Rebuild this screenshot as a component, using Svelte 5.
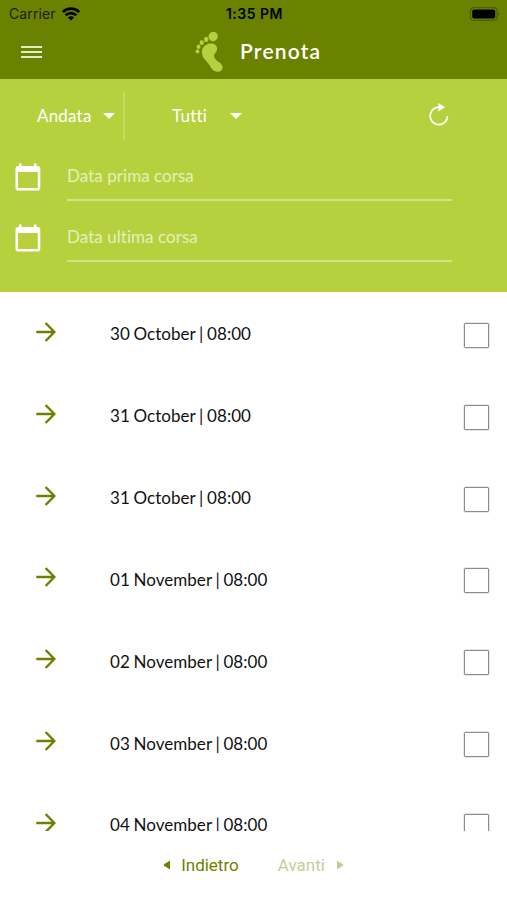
<script>
  let direction = 'Andata';
  let filter = 'Tutti';

  const dateFields = ['Data prima corsa', 'Data ultima corsa'];

  let rides = [
    { date: '30 October', time: '08:00', selected: false },
    { date: '31 October', time: '08:00', selected: false },
    { date: '31 October', time: '08:00', selected: false },
    { date: '01 November', time: '08:00', selected: false },
    { date: '02 November', time: '08:00', selected: false },
    { date: '03 November', time: '08:00', selected: false },
    { date: '04 November', time: '08:00', selected: false }
  ];
</script>

<div class="app">
  <header>
    <div class="status-bar">
      <div class="carrier">
        <span>Carrier</span>
        <svg width="18" height="14" viewBox="0 0 18 14" fill="none" stroke="#000" stroke-width="2.7">
          <path d="M0.8 5 A11.5 11.5 0 0 1 17.2 5" />
          <path d="M3.7 8.3 A7.5 7.5 0 0 1 14.3 8.3" />
          <path d="M9 13.6 L6 10.6 A4.2 4.2 0 0 1 12 10.6 Z" fill="#000" stroke="none" />
        </svg>
      </div>
      <span class="clock">1:35 PM</span>
      <svg class="battery" width="31" height="14" viewBox="0 0 31 14">
        <rect x="1.4" y="0.7" width="26.6" height="12.6" rx="3.5" fill="none" stroke="#4d5f00" stroke-width="1.2" />
        <rect x="3.2" y="2.5" width="23" height="9" rx="2" fill="#000" />
        <path d="M29.2 5 Q32 7 29.2 9 Z" fill="#4d5f00" />
      </svg>
    </div>
    <div class="title-bar">
      <button class="menu" aria-label="Menu">
        <span></span>
        <span></span>
        <span></span>
      </button>
      <div class="title">
        <svg width="28" height="42" viewBox="0 0 28 42" fill="#b7d13e">
          <ellipse cx="18.2" cy="5.5" rx="4.6" ry="4.8" transform="rotate(20 18.2 5.5)" />
          <ellipse cx="11.2" cy="8.4" rx="2.2" ry="2.6" />
          <ellipse cx="6.7" cy="11.7" rx="2.1" ry="2.4" />
          <ellipse cx="3.6" cy="15.8" rx="1.9" ry="2.2" />
          <ellipse cx="2.5" cy="20.4" rx="1.9" ry="2" />
          <path d="M15 12.5 C10 13 6.6 17 7 22 C7.3 27 11 29 14 33.5 C16.5 37.5 18 40.5 22.5 40.8 C26.5 41 28.4 38 27.3 34.8 C26.2 31.7 22.7 31 20.3 28 C18.3 25.4 19 23.4 20.5 21.7 C23.3 18.6 22.9 12 15 12.5 Z" />
        </svg>
        <h1>Prenota</h1>
      </div>
    </div>
  </header>

  <section class="filters">
    <div class="selects">
      <button class="select direction">{direction}<i class="caret"></i></button>
      <button class="select kind">{filter}<i class="caret"></i></button>
      <button class="reload" aria-label="Ricarica">
        <svg width="22" height="24" viewBox="0 0 22 24">
          <path d="M10.5 4.2 A8.7 8.7 0 1 0 19.5 13" fill="none" stroke="#fff" stroke-width="1.7" />
          <path d="M10.3 0 L17 4.3 L10.3 8.4 Z" fill="#fff" />
        </svg>
      </button>
    </div>
    {#each dateFields as label}
      <div class="date-field">
        <svg width="26" height="28" viewBox="0 0 26 28">
          <path fill="#fff" fill-rule="evenodd" d="M4 0.5 H6.5 V3 H19 V0.5 H21.5 V3 H22.5 Q25.3 3 25.3 5.8 V24.7 Q25.3 27.5 22.5 27.5 H3.3 Q0.5 27.5 0.5 24.7 V5.8 Q0.5 3 3.3 3 H4 Z M3 9 V25 H22.8 V9 Z" />
        </svg>
        <input type="text" placeholder={label} />
      </div>
    {/each}
  </section>

  <main>
    {#each rides as ride}
      <div class="ride">
        <svg class="arrow" width="20" height="20" viewBox="0 0 20 20" fill="none" stroke="#6b8200" stroke-width="2.4">
          <path d="M0.3 10 H18 M9.6 1 L18.4 10 L9.6 19" />
        </svg>
        <span class="label">{ride.date} | {ride.time}</span>
        <input type="checkbox" aria-label={ride.date} bind:checked={ride.selected} />
      </div>
    {/each}
  </main>

  <footer>
    <button class="back">
      <svg width="7" height="10" viewBox="0 0 7 10"><path d="M7 0.5 V9.5 L1 5.8 Q0.4 5 1 4.2 Z" fill="currentColor" /></svg>
      Indietro
    </button>
    <button class="next" disabled>
      Avanti
      <svg width="7" height="10" viewBox="0 0 7 10"><path d="M0 0.5 V9.5 L6 5.8 Q6.6 5 6 4.2 Z" fill="currentColor" /></svg>
    </button>
  </footer>
</div>

<style>
  :global(body) {
    background: #fff;
  }

  .app {
    display: flex;
    flex-direction: column;
    height: 900px;
    overflow: hidden;
    font-family: Lato, sans-serif;
    font-size: 17px;
    font-variant-ligatures: none;
  }

  button {
    padding: 0;
    border: none;
    background: none;
    color: inherit;
    font: inherit;
    font-variant-ligatures: none;
  }

  svg {
    display: block;
    flex: none;
  }

  header {
    flex: none;
    height: 79px;
    background: #6b8200;
  }

  .status-bar {
    display: grid;
    grid-template-columns: 1fr auto 1fr;
    align-items: center;
    height: 27px;
    padding: 0 7px 0 9px;
    font-family: Inter, sans-serif;
    font-size: 14px;
    color: #000;
  }

  .carrier {
    display: flex;
    align-items: center;
    gap: 6px;
    color: #1a2000;
    letter-spacing: 0.1px;
  }

  .clock {
    font-weight: 600;
    letter-spacing: 0.5px;
  }

  .battery {
    justify-self: end;
  }

  .title-bar {
    display: flex;
    align-items: center;
    height: 50px;
    padding-left: 21px;
  }

  .menu {
    display: flex;
    flex-direction: column;
    gap: 3px;
    width: 21px;
  }

  .menu span {
    height: 2px;
    background: #e4ebc8;
  }

  .title {
    display: flex;
    align-items: center;
    gap: 17px;
    margin-left: 153px;
  }

  h1 {
    margin: -3px 0 0;
    color: #fff;
    font-size: 21px;
    font-weight: 600;
    letter-spacing: 1.2px;
    line-height: 24px;
  }

  .filters {
    flex: none;
    box-sizing: border-box;
    height: 213px;
    padding-top: 13px;
    background: #b7d13e;
    color: #fff;
  }

  .selects {
    display: flex;
    height: 48px;
  }

  .select {
    display: flex;
    align-items: center;
    padding-bottom: 1px;
    letter-spacing: 0.2px;
  }

  .direction {
    box-sizing: border-box;
    justify-content: space-between;
    width: 125px;
    padding-left: 37px;
    padding-right: 8px;
    border-right: 2px solid #c7da68;
  }

  .kind {
    justify-content: space-between;
    width: 117px;
    padding-left: 47px;
  }

  .caret {
    border: 6.5px solid transparent;
    border-top-color: #fff;
    border-bottom: none;
  }

  .reload {
    margin: 0 0 3px 186px;
  }

  .date-field {
    display: flex;
    height: 61px;
    padding-left: 15px;
  }

  .date-field svg {
    margin-top: 23px;
  }

  .date-field input {
    box-sizing: border-box;
    width: 385px;
    height: 61px;
    margin-left: 26px;
    padding: 12px 0 0;
    border: none;
    border-bottom: 2px solid #d3e38a;
    background: none;
    color: #fff;
    font: inherit;
    font-variant-ligatures: none;
    letter-spacing: 0.05px;
  }

  .date-field input::placeholder {
    color: #e6efbd;
    opacity: 1;
  }

  main {
    flex: none;
    box-sizing: border-box;
    height: 539px;
    padding-top: 1px;
    overflow: hidden;
  }

  .ride {
    display: flex;
    align-items: center;
    height: 81.85px;
    padding: 0 18px 0 36px;
  }

  .arrow {
    margin-bottom: 4px;
  }

  .label {
    margin: 1px 0 0 54px;
    color: #111;
    line-height: 20px;
    letter-spacing: 0.04px;
    word-spacing: -0.7px;
  }

  .ride input {
    appearance: none;
    box-sizing: border-box;
    width: 25px;
    height: 25px;
    margin: 3px 0 0 auto;
    border: 1px solid #8c8c8c;
    border-radius: 1px;
    box-shadow: 0 0 0 0.5px #d0d0d0;
  }

  .ride input:checked {
    background: #6b8200;
  }

  footer {
    display: flex;
    justify-content: center;
    gap: 39px;
    padding-top: 24px;
    font-family: Roboto, sans-serif;
    font-size: 17px;
    line-height: 20px;
  }

  footer button {
    display: flex;
    align-items: center;
    gap: 11px;
    color: #6b8200;
  }

  footer .next {
    gap: 12px;
    color: #c3cf99;
  }
</style>
